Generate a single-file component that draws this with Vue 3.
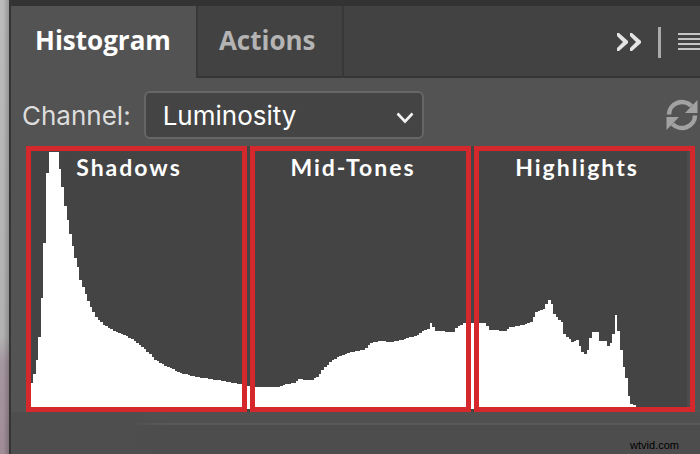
<template>
  <div class="workspace">
    <section class="panel">
      <header class="tab-bar">
        <div class="tabs" role="tablist">
          <button
            v-for="tab in tabs"
            :key="tab"
            class="tab"
            :class="{ active: tab === activeTab }"
            role="tab"
            :aria-selected="tab === activeTab"
            @click="activeTab = tab"
          >{{ tab }}</button>
        </div>
        <div class="tab-tools">
          <button class="icon-btn" aria-label="Collapse panel">
            <svg width="24" height="20" viewBox="0 0 24 20">
              <path d="M0 1V4L6 10L0 16V19H2L11 11V9L2 1ZM13 1V4L19 10L13 16V19H15L24 11V9L15 1Z" fill="#e4e4e4" />
            </svg>
          </button>
          <span class="divider"></span>
          <button class="icon-btn" aria-label="Panel menu">
            <svg width="28" height="20" viewBox="0 0 28 20">
              <path d="M0 2H28M0 7H28M0 12H28M0 17H28" fill="none" stroke="#c4c4c4" stroke-width="2" />
            </svg>
          </button>
        </div>
      </header>

      <div class="channel-row">
        <label for="channel">Channel:</label>
        <div class="select-wrap">
          <select id="channel" v-model="channel">
            <option v-for="c in channels" :key="c">{{ c }}</option>
          </select>
          <svg class="chevron" width="18" height="12" viewBox="0 0 18 12">
            <path d="M1.5 1.5L9 9.5L16.5 1.5" fill="none" stroke="#f2f2f2" stroke-width="2.6" />
          </svg>
        </div>
        <button class="icon-btn refresh" aria-label="Refresh">
          <svg width="32" height="32" viewBox="0 0 32 32">
            <path d="M3 15.5A13 12.5 0 0 1 25.5 7" fill="none" stroke="#a2a2a2" stroke-width="4.5" />
            <path d="M31.5 1V14H19Z" fill="#a2a2a2" />
            <path d="M29 16.5A13 12.5 0 0 1 6.5 25" fill="none" stroke="#a2a2a2" stroke-width="4.5" />
            <path d="M.5 31V18H13Z" fill="#a2a2a2" />
          </svg>
        </button>
      </div>

      <div class="histogram">
        <svg class="plot" viewBox="0 0 256 258" preserveAspectRatio="none">
          <path :d="plotPath" fill="#fff" shape-rendering="crispEdges" />
        </svg>
        <div class="ranges">
          <div v-for="range in ranges" :key="range" class="range">{{ range }}</div>
        </div>
      </div>

      <footer class="panel-footer">
        <span class="source">wtvid.com</span>
      </footer>
    </section>
  </div>
</template>

<script setup>
import { ref, computed } from 'vue'

const tabs = ['Histogram', 'Actions']
const activeTab = ref('Histogram')
const channels = ['Colors', 'RGB', 'Red', 'Green', 'Blue', 'Luminosity']
const channel = ref('Luminosity')
const ranges = ['Shadows', 'Mid-Tones', 'Highlights']

// [level, pixel height], levels in between are interpolated
const samples = [
  [0, 24], [1, 26], [2, 35], [3, 49], [4, 72], [5, 111], [6, 166], [7, 236],
  [8, 257], [11, 257], [12, 240], [13, 222], [14, 203], [15, 189], [16, 175],
  [17, 163], [18, 151], [19, 142], [20, 129], [21, 122], [22, 115], [23, 108],
  [24, 102], [25, 97], [26, 92], [27, 89], [29, 84], [33, 78], [37, 74],
  [41, 68], [45, 60], [49, 49], [53, 43], [59, 36], [65, 32], [73, 29],
  [83, 24], [88, 22], [97, 22], [99, 24], [103, 26], [105, 30], [107, 29],
  [110, 29], [112, 32], [115, 42], [118, 49], [121, 53], [124, 56], [127, 58],
  [130, 59], [133, 66], [136, 68], [141, 67], [146, 70], [151, 74], [153, 78],
  [155, 80], [156, 86], [157, 82], [158, 78], [165, 77], [166, 81], [169, 86],
  [177, 86], [179, 79], [185, 78], [187, 82], [192, 84], [195, 87], [197, 97],
  [200, 100], [202, 109], [203, 105], [204, 95], [206, 89], [207, 87],
  [208, 75], [211, 67], [213, 69], [215, 57], [216, 55], [217, 59], [218, 71],
  [219, 77], [221, 77], [222, 68], [224, 68], [225, 63], [226, 66], [227, 75],
  [228, 94], [229, 78], [230, 59], [231, 42], [232, 31], [233, 13], [234, 5],
  [236, 2], [238, 0], [255, 0]
]

const plotPath = computed(() => {
  let d = 'M0 258'
  for (let i = 1; i < samples.length; i++) {
    const [from, a] = samples[i - 1]
    const [to, b] = samples[i]
    for (let level = from; level < to; level++) {
      const h = Math.round(a + (b - a) * (level - from) / (to - from))
      d += `V${258 - h}H${level + 1}`
    }
  }
  return d + 'V258Z'
})
</script>

<style>
html,
body {
  margin: 0;
  background: #505050;
}
</style>

<style scoped>
.workspace {
  box-sizing: border-box;
  min-height: 100vh;
  display: flex;
  padding-left: 9px;
  overflow: hidden;
  background:
    linear-gradient(to right, transparent 3px, rgba(0, 0, 0, 0.2) 9px),
    linear-gradient(#bbb, #b2b2b2 74%, #a596a0 80%, #a08c96);
  font-family: Inter, "Liberation Sans", sans-serif;
}

.panel {
  flex: 1;
  min-width: 0;
  display: flex;
  flex-direction: column;
  border-left: 2px solid #353535;
  background: #535353;
}

button {
  margin: 0;
  padding: 0;
  border: 0;
  background: none;
}

.tab-bar {
  display: flex;
  justify-content: space-between;
  height: 72px;
  border-top: 6px solid #333;
  background: #424242;
  box-shadow: inset 0 -2px #353535;
  overflow: hidden;
}

.tabs {
  display: flex;
}

.tab {
  padding: 0 26px 4px 21px;
  border-right: 2px solid #383838;
  color: #b4b4b4;
  font: bold 26px "Open Sans", "Noto Sans", sans-serif;
}

.tab.active {
  padding: 0 25px 4px 24px;
  background: #535353;
  color: #fff;
}

.tab-tools {
  display: flex;
  align-items: center;
  gap: 17px;
  margin-right: -6px;
}

.icon-btn svg {
  display: block;
}

.divider {
  width: 3px;
  height: 31px;
  background: #aaa;
}

.channel-row {
  display: flex;
  align-items: center;
  height: 48px;
  padding: 13px 2px 7px 11px;
  color: #ddd;
  font-size: 26px;
}

.select-wrap {
  position: relative;
  flex: 0 0 280px;
  height: 48px;
  margin-left: 13px;
}

select {
  appearance: none;
  box-sizing: border-box;
  width: 100%;
  height: 100%;
  padding: 0 40px 0 17px;
  border: 2px solid #666;
  border-radius: 6px;
  background: #444;
  color: #fff;
  font: inherit;
}

.chevron {
  position: absolute;
  top: 21px;
  right: 10px;
  pointer-events: none;
}

.refresh {
  margin-left: auto;
}

.histogram {
  position: relative;
  height: 266px;
  margin: 0 5px 0 15px;
  background: linear-gradient(to left, #535353 5px, #4c4c4c 5px, #4c4c4c 8px, #444 8px);
}

.plot {
  position: absolute;
  top: 5px;
  left: 2px;
  width: calc(100% - 10px);
  height: 258px;
}

.ranges {
  position: relative;
  height: 100%;
  display: flex;
  gap: 3px;
}

.range {
  flex: 1;
  box-sizing: border-box;
  padding: 2px 15px 0 0;
  border: 5px solid #d5282c;
  color: #fff;
  font: bold 23px/28px Lato, "Open Sans", sans-serif;
  letter-spacing: 2px;
  text-align: center;
}

.panel-footer {
  flex: 1;
  display: flex;
  align-items: flex-end;
  justify-content: flex-end;
  padding: 0 21px 1px 0;
  background:
    linear-gradient(to right, #4e4e4e 120px, transparent 150px),
    linear-gradient(#505050 11px, #595959 11px, #595959 13px, #4d4d4d 13px);
}

.source {
  color: #000;
  font: 11px/16px "Liberation Sans", sans-serif;
}
</style>
